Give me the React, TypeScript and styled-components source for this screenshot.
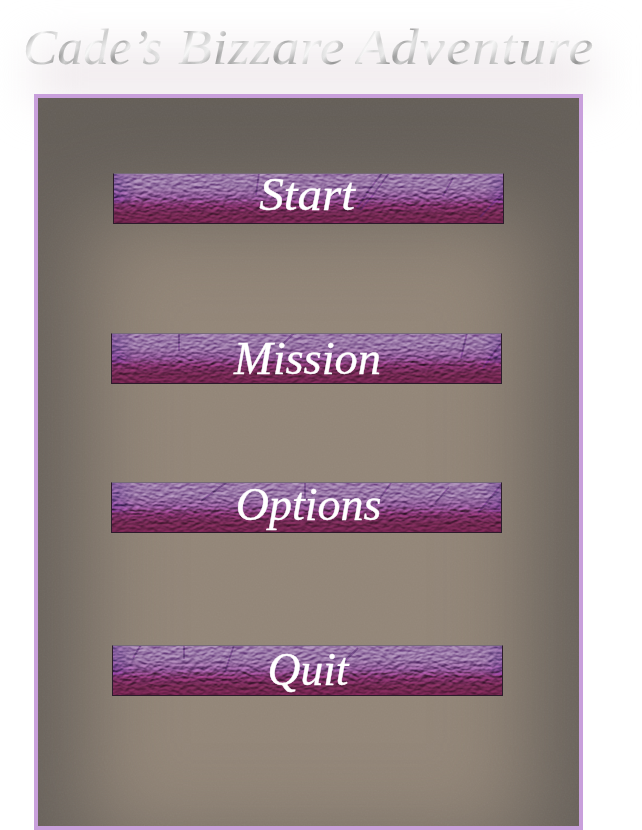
import React from "react";
import styled, { createGlobalStyle } from "styled-components";

const GlobalStyle = createGlobalStyle`
  * { box-sizing: border-box; }
  html, body { margin: 0; background: #fff; overflow: hidden; }
`;

const Page = styled.main`
  width: 642px;
  height: 830px;
  overflow: hidden;
  font-family: "Liberation Serif", serif;
  font-style: italic;
`;

const Header = styled.header`
  position: relative;
  height: 94px;
  padding: 18px 0 0 23px;
`;

const Glow = styled.div`
  position: absolute;
  left: 34px;
  top: 50px;
  width: 560px;
  height: 50px;
  background: #efe9ec;
  filter: blur(23px);
`;

const Title = styled.h1`
  position: relative;
  display: flex;
  margin: 0;
  font-size: 50px;
  line-height: 58px;
  font-weight: 400;
`;

const Word = styled.span<{ $width: number; $scale: number; $spacing: number }>`
  width: ${(p) => p.$width}px;
  flex: none;
  padding-right: 6px;
  transform: scaleX(${(p) => p.$scale});
  transform-origin: 0 50%;
  letter-spacing: ${(p) => p.$spacing}px;
  white-space: nowrap;
  color: transparent;
  background:
    linear-gradient(180deg, rgba(255,255,255,0) 35%, rgba(255,255,255,.35) 52%, rgba(255,255,255,0) 66%, rgba(100,100,100,.25) 83%),
    repeating-linear-gradient(118deg, #a3a3a3 0 2px, #e2e2e2 8px, #bababa 15px, #f6f6f6 23px, #cecece 30px, #e9e9e9 39px, #a3a3a3 48px);
  background-clip: text;
  -webkit-background-clip: text;
`;

const Panel = styled.nav`
  position: relative;
  width: 549px;
  height: 736px;
  margin-left: 34px;
  padding-top: 75px;
  border: 4px solid #c9a0dc;
  background: #938678;
  box-shadow: inset 0 70px 90px 45px #645e58;
`;

const Surface = styled.svg`
  position: absolute;
  inset: 0;
  width: 100%;
  height: 100%;
  pointer-events: none;
`;

const TextureRect = styled.rect`
  mix-blend-mode: overlay;
`;

const MenuButton = styled.button<{ $left: number; $gap: number }>`
  position: relative;
  isolation: isolate;
  display: block;
  width: 391px;
  height: 51px;
  margin: 0 0 ${(p) => p.$gap}px ${(p) => p.$left}px;
  padding: 0;
  border: 0;
  background: linear-gradient(#9d7dac 0%, #9875a6 28%, #8c5594 48%, #7d3169 64%, #6f2850 80%, #742450 100%);
  color: #fff;
  font: italic 46px/51px "Liberation Serif", serif;
  text-align: center;
  &::after {
    content: "";
    position: absolute;
    inset: 0;
    border: 1px solid #2c1b2b;
    border-top-color: #766b78;
    pointer-events: none;
  }
`;

const Label = styled.span<{ $x: number; $y: number; $scale: number }>`
  position: relative;
  z-index: 1;
  display: block;
  transform: translate(${(p) => p.$x}px, ${(p) => p.$y}px) scaleX(${(p) => p.$scale});
  -webkit-text-stroke: 0.4px #fff;
`;

const items = [
  { label: "Start", left: 75, gap: 109, x: -1.5, y: -4, scale: 1.07, seed: 4, cracks: "M146 0l-3 22M269 0l-15 20-10 15M276 0l-16 22-13 15M340 5l-10 18M390 20l-23 24" },
  { label: "Mission", left: 73, gap: 98, x: 1, y: 0, scale: 1.01, seed: 19, cracks: "M68 0v18M183 0l-13 13M356 0l-6 25M390 10l-18 25" },
  { label: "Options", left: 73, gap: 112, x: 2, y: -3, scale: 1, seed: 31, cracks: "M116 0l-26 19M194 1v16M280 1l-16 22M338 5l-14 16M390 3l-23 28" },
  { label: "Quit", left: 74, gap: 0, x: 0.5, y: -1, scale: 0.99, seed: 47, cracks: "M72 0v14M122 0l-9 27M246 3l-22 22M29 0l-8 13" },
];

function Leather({ seed, cracks }: { seed: number; cracks: string }) {
  const id = `leather-${seed}`;
  return (
    <Surface viewBox="0 0 391 51" aria-hidden>
      <defs>
        <filter id={id} x="0" y="0" width="100%" height="100%" colorInterpolationFilters="sRGB">
          <feTurbulence type="fractalNoise" baseFrequency="0.17 0.34" numOctaves="2" seed={seed} />
          <feColorMatrix values="0 0 0 0 0  0 0 0 0 0  0 0 0 0 0  1 0 0 0 0" />
          <feDiffuseLighting surfaceScale="1.5" diffuseConstant="0.88" lightingColor="#fff">
            <feDistantLight azimuth="255" elevation="34" />
          </feDiffuseLighting>
        </filter>
        <linearGradient id={`${id}-edge`}>
          <stop offset="0" stopColor="#4d187d" stopOpacity=".35" />
          <stop offset=".06" stopColor="#4d187d" stopOpacity="0" />
          <stop offset=".95" stopColor="#4d187d" stopOpacity="0" />
          <stop offset="1" stopColor="#4d187d" stopOpacity=".3" />
        </linearGradient>
        <linearGradient id={`${id}-fade`} x2="0" y2="1">
          <stop offset="0" stopColor="#fff" stopOpacity=".55" />
          <stop offset=".55" stopColor="#fff" stopOpacity=".9" />
          <stop offset="1" stopColor="#fff" stopOpacity=".35" />
        </linearGradient>
        <mask id={`${id}-mask`}>
          <rect width="391" height="51" fill={`url(#${id}-fade)`} />
        </mask>
      </defs>
      <rect width="391" height="30" fill={`url(#${id}-edge)`} />
      <path d={cracks} fill="none" stroke="#562471" strokeWidth="1.8" opacity=".5" />
      <TextureRect width="391" height="51" filter={`url(#${id})`} mask={`url(#${id}-mask)`} opacity=".8" />
    </Surface>
  );
}

function Grain() {
  return (
    <Surface aria-hidden>
      <filter id="grain" x="0" y="0" width="100%" height="100%">
        <feTurbulence type="fractalNoise" baseFrequency="0.65" numOctaves="2" seed="8" />
        <feColorMatrix type="saturate" values="0" />
      </filter>
      <rect width="100%" height="100%" filter="url(#grain)" opacity=".05" />
    </Surface>
  );
}

export default function App() {
  return (
    <Page>
      <GlobalStyle />
      <Header>
        <Glow />
        <Title>
          <Word $width={155} $scale={1.03} $spacing={0}>Cade’s</Word>
          <Word $width={177} $scale={1.11} $spacing={0.3}>Bizzare</Word>
          <Word $width={222} $scale={1.135} $spacing={0.8}>Adventure</Word>
        </Title>
      </Header>
      <Panel>
        <Grain />
        {items.map((item) => (
          <MenuButton key={item.label} $left={item.left} $gap={item.gap}>
            <Leather seed={item.seed} cracks={item.cracks} />
            <Label $x={item.x} $y={item.y} $scale={item.scale}>{item.label}</Label>
          </MenuButton>
        ))}
      </Panel>
    </Page>
  );
}
